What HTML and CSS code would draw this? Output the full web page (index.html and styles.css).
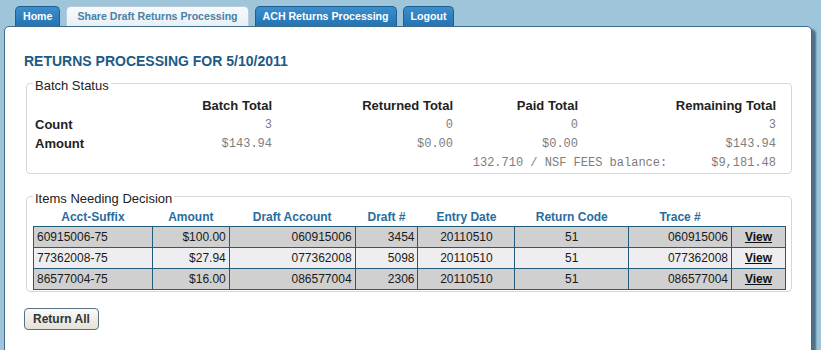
FILE: index.html
```html
<!DOCTYPE html>
<html lang="en">
<head>
    <meta charset="UTF-8">
    <title>Returns Processing</title>
    <link rel="stylesheet" href="styles.css">
</head>
<body>
    <ul class="tabs">
        <li><a href="#" class="tab">Home</a></li>
        <li><a href="#" class="tab active">Share Draft Returns Processing</a></li>
        <li><a href="#" class="tab">ACH Returns Processing</a></li>
        <li><a href="#" class="tab">Logout</a></li>
    </ul>

    <div class="panel">
        <h1 class="page-title">RETURNS PROCESSING FOR 5/10/2011</h1>

        <!-- Batch totals -->
        <fieldset class="group batch">
            <legend>Batch Status</legend>
            <table class="batch-table">
                <colgroup>
                    <col style="width:117px">
                    <col style="width:124px">
                    <col style="width:181px">
                    <col style="width:125px">
                    <col style="width:198px">
                </colgroup>
                <tr>
                    <th></th>
                    <th>Batch Total</th>
                    <th>Returned Total</th>
                    <th>Paid Total</th>
                    <th>Remaining Total</th>
                </tr>
                <tr>
                    <th class="label">Count</th>
                    <td>3</td>
                    <td>0</td>
                    <td>0</td>
                    <td>3</td>
                </tr>
                <tr>
                    <th class="label">Amount</th>
                    <td>$143.94</td>
                    <td>$0.00</td>
                    <td>$0.00</td>
                    <td>$143.94</td>
                </tr>
                <tr>
                    <td colspan="5"><span>132.710 / NSF FEES balance:</span><span class="nsf-value">$9,181.48</span></td>
                </tr>
            </table>
        </fieldset>

        <!-- Items list -->
        <fieldset class="group items">
            <legend>Items Needing Decision</legend>
            <table class="items-table">
                <colgroup>
                    <col style="width:119px">
                    <col style="width:77px">
                    <col style="width:126px">
                    <col style="width:63px">
                    <col style="width:97px">
                    <col style="width:114px">
                    <col style="width:103px">
                    <col style="width:54px">
                </colgroup>
                <thead>
                    <tr>
                        <th>Acct-Suffix</th>
                        <th>Amount</th>
                        <th>Draft Account</th>
                        <th>Draft #</th>
                        <th>Entry Date</th>
                        <th>Return Code</th>
                        <th>Trace #</th>
                        <th></th>
                    </tr>
                </thead>
                <tbody>
                    <tr>
                        <td>60915006-75</td>
                        <td class="num">$100.00</td>
                        <td class="num">060915006</td>
                        <td class="num">3454</td>
                        <td class="mid">20110510</td>
                        <td class="mid">51</td>
                        <td class="num">060915006</td>
                        <td class="mid"><a href="#" class="view">View</a></td>
                    </tr>
                    <tr>
                        <td>77362008-75</td>
                        <td class="num">$27.94</td>
                        <td class="num">077362008</td>
                        <td class="num">5098</td>
                        <td class="mid">20110510</td>
                        <td class="mid">51</td>
                        <td class="num">077362008</td>
                        <td class="mid"><a href="#" class="view">View</a></td>
                    </tr>
                    <tr>
                        <td>86577004-75</td>
                        <td class="num">$16.00</td>
                        <td class="num">086577004</td>
                        <td class="num">2306</td>
                        <td class="mid">20110510</td>
                        <td class="mid">51</td>
                        <td class="num">086577004</td>
                        <td class="mid"><a href="#" class="view">View</a></td>
                    </tr>
                </tbody>
            </table>
        </fieldset>

        <button class="button">Return All</button>
    </div>
</body>
</html>
```

FILE: styles.css
```css
body {
    font-family: 'Liberation Sans', Arial, sans-serif;
    background: #9ec5d9;
    color: #222;
    margin: 0;
    padding: 0;
    overflow: hidden;
}

/* Tabs */
.tabs {
    list-style: none;
    display: flex;
    align-items: flex-end;
    gap: 6px;
    margin: 0;
    padding: 6px 0 0 15px;
}
.tab {
    display: block;
    height: 19px;
    line-height: 19px;
    padding: 0 7px;
    font-size: 10.6px;
    font-weight: bold;
    color: #fff;
    text-decoration: none;
    background: linear-gradient(#3b8fcb, #2473b4);
    border: 1px solid #1d5f93;
    border-bottom: none;
    border-radius: 5px 5px 0 0;
}
.tab.active {
    padding: 0 10px;
    background: linear-gradient(#f7fafc, #e8f0f5);
    color: #4a7fa8;
    border-color: #b9ccd9;
}

/* Main panel */
.panel {
    background: #fff;
    border: 1px solid #3f6c8a;
    border-radius: 5px;
    margin: 0 9px 0 4px;
    padding: 0 19px 40px;
    min-height: 300px;
    box-shadow: 4px 3px 2px #4f7089;
}
.page-title {
    margin: 26px 0 0;
    font-size: 14px;
    line-height: 16px;
    color: #1d5b86;
}

.group {
    margin: 0 0 0 2px;
    border: 1px solid #d3d7da;
    border-radius: 4px;
    min-width: 0;
}
.group legend {
    padding: 5px 2px 0;
    font-size: 13px;
    line-height: 11px;
    color: #222;
}
.batch {
    margin-top: 6px;
    padding: 5px 8px 1px 6px;
}
.items {
    margin-top: 14px;
    padding: 3px 5px 1px 6px;
}

/* Batch table */
.batch-table {
    table-layout: fixed;
    border-collapse: collapse;
    border-spacing: 0;
}
.batch-table th,
.batch-table td {
    padding: 0 2px;
    height: 19px;
    line-height: 19px;
    text-align: right;
    white-space: nowrap;
}
.batch-table th {
    font-size: 13px;
    color: #222;
}
.batch-table th.label {
    text-align: left;
}
.batch-table td {
    font-family: 'Liberation Mono', 'Courier New', monospace;
    font-size: 12px;
    color: #7d7d7d;
    padding-top: 1px;
    height: 18px;
    line-height: 18px;
}
.nsf-value {
    margin-left: 44px;
}

/* Items table */
.items-table {
    table-layout: fixed;
    border-collapse: collapse;
    border-spacing: 0;
    font-size: 12px;
}
.items-table th {
    padding: 3px 2px 1px;
    line-height: 15px;
    color: #2a6c9c;
    text-align: center;
}
.items-table td {
    padding: 2px 3px;
    line-height: 16px;
    border: 1px solid #245c7c;
    color: #1a1a1a;
    white-space: nowrap;
}
.items-table tbody tr:nth-child(odd) {
    background: #d0d0d0;
}
.items-table tbody tr:nth-child(even) {
    background: #eeeef0;
}
.items-table .num {
    text-align: right;
}
.items-table .mid {
    text-align: center;
}
.view {
    color: #111;
    font-weight: bold;
    text-decoration: underline;
}

.button {
    margin-top: 16px;
    height: 22px;
    padding: 0 8px;
    font-family: 'Liberation Sans', Arial, sans-serif;
    font-size: 12px;
    font-weight: bold;
    line-height: 20px;
    color: #333;
    background: linear-gradient(#fafaf8, #e4e1d6);
    border: 1px solid #587282;
    border-radius: 4px;
    cursor: pointer;
}
```
